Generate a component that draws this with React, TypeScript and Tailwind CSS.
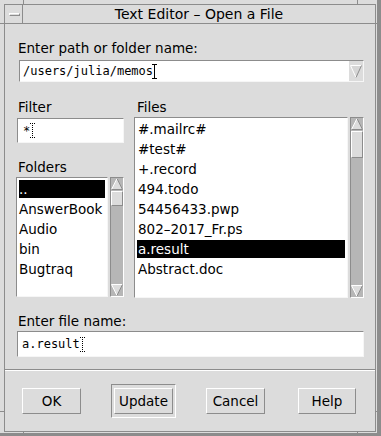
import React from 'react';

function UpArrow() {
  return (
    <svg width="12" height="12" viewBox="0 0 12 12" className="block">
      <polygon points="6,0.5 11.5,11.5 0.5,11.5" fill="#dcdcdc" />
      <line x1="0.5" y1="11.5" x2="6" y2="0.5" stroke="#ffffff" strokeWidth="1" />
      <line x1="6" y1="0.5" x2="11.5" y2="11.5" stroke="#8c8c8c" strokeWidth="1" />
      <line x1="0.5" y1="11.5" x2="11.5" y2="11.5" stroke="#8c8c8c" strokeWidth="1" />
    </svg>
  );
}

function DownArrow() {
  return (
    <svg width="12" height="12" viewBox="0 0 12 12" className="block">
      <polygon points="0.5,0.5 11.5,0.5 6,11.5" fill="#dcdcdc" />
      <line x1="0.5" y1="0.5" x2="11.5" y2="0.5" stroke="#ffffff" strokeWidth="1" />
      <line x1="0.5" y1="0.5" x2="6" y2="11.5" stroke="#ffffff" strokeWidth="1" />
      <line x1="6" y1="11.5" x2="11.5" y2="0.5" stroke="#8c8c8c" strokeWidth="1" />
    </svg>
  );
}

function ScrollBar({ sliderClass }: { sliderClass: string }) {
  return (
    <div className="flex h-full w-[14px] flex-col border border-t-[#8c8c8c] border-l-[#8c8c8c] border-b-white border-r-white bg-[#b6b6b6]">
      <div className="flex h-[13px] items-start justify-center">
        <UpArrow />
      </div>
      <div className={`w-full border border-t-white border-l-white border-b-[#8c8c8c] border-r-[#8c8c8c] bg-[#dcdcdc] ${sliderClass}`} />
      <div className="flex-1" />
      <div className="flex h-[13px] items-end justify-center">
        <DownArrow />
      </div>
    </div>
  );
}

function IBeam() {
  return (
    <svg width="5" height="15" viewBox="0 0 5 15" className="ml-[-1px] block">
      <line x1="0" y1="0.5" x2="5" y2="0.5" stroke="#000" />
      <line x1="2.5" y1="0" x2="2.5" y2="15" stroke="#000" />
      <line x1="0" y1="14.5" x2="5" y2="14.5" stroke="#000" />
    </svg>
  );
}

function DotBeam() {
  return (
    <svg width="5" height="15" viewBox="0 0 5 15" className="block">
      <line x1="0" y1="0.5" x2="5" y2="0.5" stroke="#000" strokeDasharray="1 1" />
      <line x1="2.5" y1="0" x2="2.5" y2="15" stroke="#000" strokeDasharray="1 1" />
      <line x1="0" y1="14.5" x2="5" y2="14.5" stroke="#000" strokeDasharray="1 1" />
    </svg>
  );
}

const sunken =
  'border border-t-[#8c8c8c] border-l-[#8c8c8c] border-b-[#f6f6f6] border-r-[#f6f6f6]';
const raised =
  'border border-t-white border-l-white border-b-[#8c8c8c] border-r-[#8c8c8c]';

const files = [
  '#.mailrc#',
  '#test#',
  '+.record',
  '494.todo',
  '54456433.pwp',
  '802\u20132017_Fr.ps',
  'a.result',
  'Abstract.doc',
];
const folders = ['..', 'AnswerBook', 'Audio', 'bin', 'Bugtraq'];

function Notch({ cls }: { cls: string }) {
  return <div className={`absolute bg-[#8c8c8c] ${cls}`} />;
}

export default function App() {
  return (
    <div
      className="relative h-[436px] w-[381px] overflow-hidden bg-[#dcdcdc] pl-[4px] pt-[4px] pr-[1px] pb-[1px] border-r-[4px] border-b-[3px] border-[#8c8c8c] text-black"
      style={{ fontFamily: '"DejaVu Sans", sans-serif' }}
    >
      <Notch cls="left-[23px] top-0 h-[4px] w-[1px]" />
      <Notch cls="left-[357px] top-0 h-[4px] w-[1px]" />
      <Notch cls="left-0 top-[23px] h-[1px] w-[4px]" />
      <Notch cls="right-0 top-[23px] h-[1px] w-[1px]" />
      <Notch cls="left-0 top-[411px] h-[1px] w-[4px]" />
      <Notch cls="right-0 top-[411px] h-[1px] w-[1px]" />
      <Notch cls="left-[23px] bottom-0 h-[1px] w-[1px]" />
      <Notch cls="left-[357px] bottom-0 h-[1px] w-[1px]" />

      <div className="flex h-full w-full flex-col border border-[#8c8c8c]">
        {/* Title bar */}
        <div className="flex h-[19px] border-b border-[#8c8c8c]">
          <div className="flex w-[18px] items-center justify-center border-r border-[#8c8c8c]">
            <div className="ml-[2px] h-[3px] w-[11px] border border-t-white border-l-white border-b-[#8c8c8c] border-r-[#8c8c8c]" />
          </div>
          <div className="flex flex-1 items-center justify-center text-[14px] leading-[18px]">
            Text Editor – Open a File
          </div>
        </div>

        {/* Content */}
        <div className="flex flex-1 flex-col pl-[11px] pr-[11px] text-[13.5px] leading-[16px]">
          <div className="ml-[2px] mt-[16px]">Enter path or folder name:</div>
          <div className={`ml-[3px] mt-[4px] flex h-[22px] w-[345px] ${sunken}`}>
            <div
              className="flex flex-1 items-center bg-white pl-[3px] text-[12px]"
              style={{ fontFamily: '"DejaVu Sans Mono", monospace' }}
            >
              <span>/users/julia/memos</span>
              <IBeam />
            </div>
            <div className="flex w-[14px] items-center justify-center bg-[#dcdcdc]">
              <svg width="12" height="13" viewBox="0 0 12 13" className="block">
                <polygon points="0.5,0.5 11.5,0.5 6,12.5" fill="#d6d6d6" />
                <line x1="0.5" y1="0.5" x2="11.5" y2="0.5" stroke="#ffffff" />
                <line x1="0.5" y1="0.5" x2="6" y2="12.5" stroke="#ffffff" />
                <line x1="6" y1="12.5" x2="11.5" y2="0.5" stroke="#8c8c8c" />
              </svg>
            </div>
          </div>

          <div className="mt-[17px] flex gap-[10px]">
            {/* Left column */}
            <div className="flex w-[108px] flex-col">
              <div className="ml-[2px]">Filter</div>
              <div
                className={`ml-[1px] mt-[3px] flex h-[25px] w-[107px] items-center bg-white pl-[5px] text-[12px] ${sunken}`}
                style={{ fontFamily: '"DejaVu Sans Mono", monospace' }}
              >
                <span>*</span>
                <DotBeam />
              </div>
              <div className="ml-[2px] mt-[16px]">Folders</div>
              <div className="mt-[2px] flex h-[120px] gap-[2px]">
                <div className={`w-[92px] bg-white px-[2px] pt-[2px] ${sunken}`}>
                  {folders.map((f, i) => (
                    <div
                      key={f}
                      className={`mb-[2px] h-[18px] whitespace-nowrap leading-[18px] ${
                        i === 0 ? 'bg-black text-white' : ''
                      }`}
                    >
                      {f}
                    </div>
                  ))}
                </div>
                <ScrollBar sliderClass="h-[15px]" />
              </div>
            </div>

            {/* Right column */}
            <div className="flex w-[230px] flex-col">
              <div className="ml-[3px]">Files</div>
              <div className="mt-[2px] flex h-[181px] gap-[2px]">
                <div className={`w-[214px] bg-white px-[2px] pt-[2px] ${sunken}`}>
                  {files.map((f, i) => (
                    <div
                      key={f}
                      className={`mb-[2px] h-[18px] whitespace-nowrap pl-[1px] leading-[18px] ${
                        i === 6 ? 'bg-black text-white' : ''
                      }`}
                    >
                      {f}
                    </div>
                  ))}
                </div>
                <ScrollBar sliderClass="h-[27px]" />
              </div>
            </div>
          </div>

          <div className="ml-[2px] mt-[15px]">Enter file name:</div>
          <div
            className={`ml-[1px] mt-[2px] flex h-[26px] w-[347px] items-center bg-white pl-[4px] text-[12px] ${sunken}`}
            style={{ fontFamily: '"DejaVu Sans Mono", monospace' }}
          >
            <span>a.result</span>
            <DotBeam />
          </div>
        </div>

        {/* Separator */}
        <div className="mt-[11px] h-[2px] border-t border-b border-t-[#8c8c8c] border-b-white" />

        {/* Buttons */}
        <div className="flex h-[60px] items-start pt-[13px] text-[13.5px]">
          <button className={`ml-[17px] mt-[4px] h-[26px] w-[59px] ${raised} bg-[#dcdcdc]`}>OK</button>
          <div className="ml-[30px] flex h-[34px] w-[65px] items-center justify-center border border-t-[#8c8c8c] border-l-[#8c8c8c] border-b-white border-r-white">
            <button className={`h-[26px] w-[59px] ${raised} bg-[#dcdcdc]`}>Update</button>
          </div>
          <button className={`ml-[30px] mt-[4px] h-[26px] w-[59px] ${raised} bg-[#dcdcdc]`}>Cancel</button>
          <button className={`ml-[33px] mt-[4px] h-[26px] w-[58px] ${raised} bg-[#dcdcdc]`}>Help</button>
        </div>
      </div>
    </div>
  );
}
